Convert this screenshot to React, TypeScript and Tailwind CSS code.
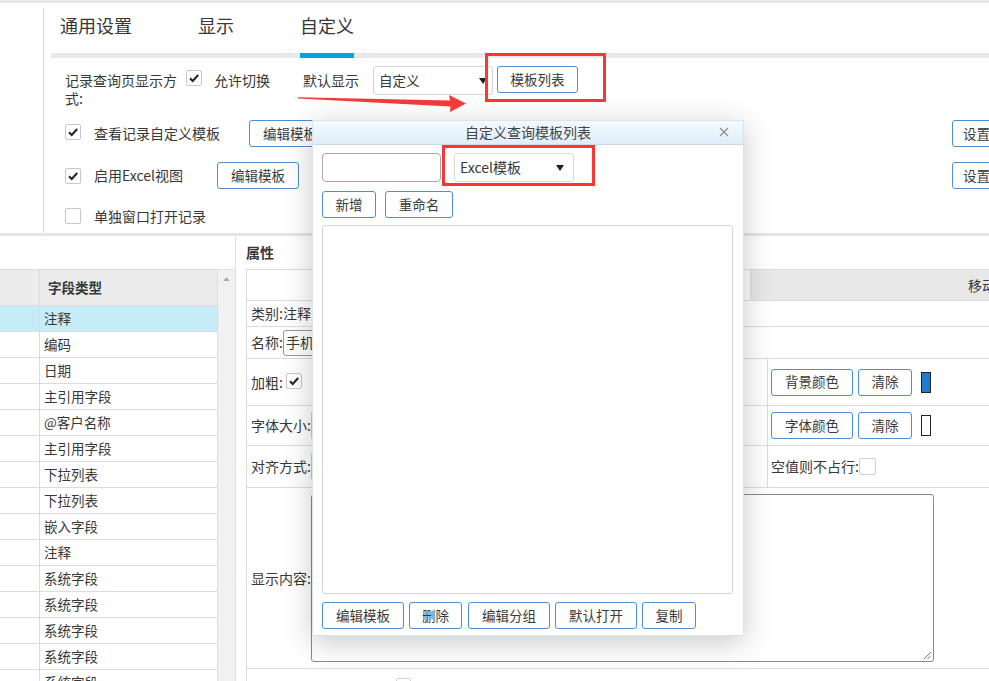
import React from "react";

const fieldTypes = [
  "注释",
  "编码",
  "日期",
  "主引用字段",
  "@客户名称",
  "主引用字段",
  "下拉列表",
  "下拉列表",
  "嵌入字段",
  "注释",
  "系统字段",
  "系统字段",
  "系统字段",
  "系统字段",
  "系统字段",
];

const Check: React.FC<{ checked?: boolean; className?: string }> = ({
  checked,
  className = "",
}) => (
  <span
    className={`inline-flex h-[16px] w-[16px] shrink-0 items-center justify-center rounded-[2px] border border-[#c8c8c8] bg-white ${className}`}
  >
    {checked && (
      <svg viewBox="0 0 12 12" className="h-[12px] w-[12px]">
        <path d="M2 6.3 L4.7 9 L10.2 3" fill="none" stroke="#222" strokeWidth="2" />
      </svg>
    )}
  </span>
);

const Btn: React.FC<{ children: React.ReactNode; className?: string }> = ({
  children,
  className = "",
}) => (
  <button
    className={`flex h-[27px] shrink-0 items-center justify-center rounded-[3px] border border-[#4a8fd8] bg-white text-[13.5px] leading-none text-[#3a3a3a] ${className}`}
  >
    {children}
  </button>
);

const Caret = () => (
  <svg viewBox="0 0 8 6" className="h-[6px] w-[8px]">
    <path d="M0 0 H8 L4 6 Z" fill="#222" />
  </svg>
);

const App: React.FC = () => {
  return (
    <div className="relative h-[681px] w-[989px] overflow-hidden bg-white font-['Noto_Sans_CJK_SC','Microsoft_YaHei',sans-serif] text-[#383838]">
      {/* top settings */}
      <div className="flex h-[236px] border-t-[3px] border-b-[3px] border-[#e6e6e6]">
        <div className="mt-[5px] w-[44px] shrink-0 border-r border-[#d9d9d9]" />
        <div className="flex-1 pl-[7px]">
          <div className="flex gap-[66px] border-b-[5px] border-[#e8e8e8] pl-[9px]">
            <div className="-mb-[5px] border-b-[5px] border-transparent pt-[9px] pb-[14px] text-[18px] leading-[27px]">
              通用设置
            </div>
            <div className="-mb-[5px] border-b-[5px] border-transparent pt-[9px] pb-[14px] text-[18px] leading-[27px]">
              显示
            </div>
            <div className="-mb-[5px] border-b-[5px] border-[#0aa0e6] pt-[9px] pb-[14px] text-[18px] leading-[27px]">
              自定义
            </div>
          </div>

          <div className="pl-[14px] text-[14px]">
            <div className="mt-[8px] flex h-[41px] items-start">
              <div className="mt-[5px] w-[116px] leading-[18px]">记录查询页显示方式:</div>
              <Check checked className="mt-[4px] ml-[5px]" />
              <span className="mt-[5px] ml-[12px] leading-[18px]">允许切换</span>
              <span className="mt-[5px] ml-[33px] leading-[18px]">默认显示</span>
              <div className="ml-[14px] flex h-[29px] w-[120px] items-center justify-between rounded-[3px] border border-[#d4d4d4] pr-[5px] pl-[5px] text-[13.5px]">
                <span>自定义</span>
                <Caret />
              </div>
              <Btn className="ml-[4px] w-[81px]">模板列表</Btn>
            </div>

            <div className="mt-[13px] flex h-[27px] items-center">
              <Check checked className="self-start mt-[4px]" />
              <span className="ml-[13px] w-[155px]">查看记录自定义模板</span>
              <Btn className="w-[82px]">编辑模板</Btn>
              <Btn className="ml-auto -mr-[23px] w-[60px] justify-start pl-[10px]">设置</Btn>
            </div>

            <div className="mt-[15px] flex h-[27px] items-center">
              <Check checked />
              <span className="ml-[13px] w-[123px]">启用Excel视图</span>
              <Btn className="w-[82px]">编辑模板</Btn>
              <Btn className="ml-auto -mr-[23px] w-[60px] justify-start pl-[10px]">设置</Btn>
            </div>

            <div className="mt-[18px] flex h-[18px] items-center">
              <Check />
              <span className="ml-[13px]">单独窗口打开记录</span>
            </div>
          </div>
        </div>
      </div>

      {/* lower area */}
      <div className="flex h-[445px]">
        <div className="flex w-[236px] shrink-0 flex-col border-r border-[#e0e0e0]">
          <div className="h-[33px] shrink-0" />
          <div className="flex flex-1">
            <div className="w-[218px] border-t border-r border-[#dcdcdc] text-[13.5px]">
              <div className="flex h-[36px] border-b border-[#dcdcdc] bg-[#ececec] font-bold">
                <div className="w-[40px] border-r border-[#dcdcdc]" />
                <div className="flex items-center pl-[8px]">字段类型</div>
              </div>
              {fieldTypes.map((t, i) => (
                <div
                  key={i}
                  className={`flex h-[26px] border-b border-[#dcdcdc] ${i === 0 ? "bg-[#c6edf7]" : ""}`}
                >
                  <div className="w-[40px] border-r border-[#dcdcdc]" />
                  <div className="flex items-center pl-[4px]">{t}</div>
                </div>
              ))}
            </div>
            <div className="flex w-[17px] justify-center border-t border-[#e2e2e2] bg-[#f1f1f1] pt-[7px]">
              <svg viewBox="0 0 8 5" className="h-[4px] w-[7px]">
                <path d="M0 5 L4 0 L8 5 Z" fill="#a8a8a8" />
              </svg>
            </div>
          </div>
        </div>

        <div className="ml-[10px] flex flex-1 flex-col">
          <div className="flex h-[33px] shrink-0 items-center text-[14px] font-bold">属性</div>
          <div className="flex-1 border-t border-l border-[#dcdcdc] text-[14px]">
            <div className="flex h-[31px] border-b border-[#dcdcdc]">
              <div className="w-[504px] border-r border-[#dcdcdc]" />
              <div className="flex flex-1 items-center bg-[#e8e8e8] pl-[217px] whitespace-nowrap">移动</div>
            </div>
            <div className="flex h-[26px] items-center border-b border-[#dcdcdc] pl-[4px]">类别:注释</div>
            <div className="flex h-[32px] items-center border-b border-[#dcdcdc] pl-[4px]">
              <span className="w-[32px]">名称:</span>
              <div className="flex h-[26px] w-[200px] items-center rounded-[3px] border border-[#999] pl-[2px]">
                手机号码
              </div>
            </div>
            <div className="flex h-[47px] border-b border-[#dcdcdc]">
              <div className="flex w-[520px] items-center pl-[4px]">
                <span className="w-[35px]">加粗:</span>
                <Check checked className="-mt-[3px]" />
              </div>
              <div className="flex flex-1 items-center border-l border-[#dcdcdc] pl-[3px]">
                <Btn className="w-[82px]">背景颜色</Btn>
                <Btn className="ml-[5px] w-[54px]">清除</Btn>
                <span className="ml-[9px] h-[21px] w-[10px] border border-[#222] bg-[#1f7bd0]" />
              </div>
            </div>
            <div className="flex h-[40px] border-b border-[#dcdcdc]">
              <div className="flex w-[520px] items-center pl-[4px]">
                <span className="w-[60px]">字体大小:</span>
                <div className="h-[29px] w-[120px] rounded-[3px] border border-[#ccc]" />
              </div>
              <div className="flex flex-1 items-center border-l border-[#dcdcdc] pl-[3px]">
                <Btn className="w-[82px]">字体颜色</Btn>
                <Btn className="ml-[5px] w-[54px]">清除</Btn>
                <span className="ml-[9px] h-[21px] w-[10px] border border-[#222] bg-white" />
              </div>
            </div>
            <div className="flex h-[42px] border-b border-[#dcdcdc]">
              <div className="flex w-[520px] items-center pl-[4px]">
                <span className="w-[60px]">对齐方式:</span>
                <div className="h-[29px] w-[120px] rounded-[3px] border border-[#ccc]" />
              </div>
              <div className="flex flex-1 items-center border-l border-[#dcdcdc] pl-[3px]">
                <span>空值则不占行:</span>
                <span className="h-[17px] w-[17px] rounded-[2px] border border-[#d0d0d0] bg-white" />
              </div>
            </div>
            <div className="flex h-[181px] items-center border-b border-[#dcdcdc] pl-[4px]">
              <span className="w-[60px]">显示内容:</span>
              <div className="relative h-[168px] w-[623px] rounded-[3px] border border-[#8a8a8a]">
                <svg viewBox="0 0 8 8" className="absolute right-[2px] bottom-[2px] h-[8px] w-[8px]">
                  <path d="M1 8 L8 1 M4.5 8 L8 4.5" stroke="#777" strokeWidth="1" />
                </svg>
              </div>
            </div>
            <div className="flex h-[20px] items-start pt-[9px] pl-[149px]">
              <span className="h-[15px] w-[15px] rounded-[2px] border border-[#d0d0d0] bg-white" />
            </div>
          </div>
        </div>
      </div>

      {/* dialog */}
      <div className="absolute top-[120px] left-[312px] h-[516px] w-[432px] border border-[#dbe4ec] bg-white text-[14px] shadow-[0_6px_28px_rgba(0,0,0,0.22)]">
        <div className="relative h-[24px] border-b border-[#cbd9e6] bg-gradient-to-b from-[#f4f9fe] to-[#e0edf9] text-center leading-[23px] text-[#444]">
          自定义查询模板列表
          <svg viewBox="0 0 10 10" className="absolute top-[6px] right-[14px] h-[10px] w-[10px]">
            <path d="M1 1 L9 9 M9 1 L1 9" stroke="#8a8a8a" strokeWidth="1.1" />
          </svg>
        </div>
        <div className="px-[9px] pt-[8px]">
          <div className="flex">
            <div className="h-[29px] w-[119px] rounded-[4px] border border-[#a8a8a8]" />
            <div className="ml-[13px] flex h-[29px] w-[120px] items-center justify-between rounded-[3px] border border-[#dadada] pr-[9px] pl-[5px] text-[14px]">
              <span>Excel模板</span>
              <Caret />
            </div>
          </div>
          <div className="mt-[9px] flex">
            <Btn className="w-[54px]">新增</Btn>
            <Btn className="ml-[9px] w-[68px]">重命名</Btn>
          </div>
          <div className="mt-[7px] h-[369px] w-[411px] rounded-[3px] border border-[#d5d5d5]" />
          <div className="mt-[8px] flex">
            <Btn className="w-[82px]">编辑模板</Btn>
            <Btn className="ml-[5px] w-[53px]">删除</Btn>
            <Btn className="ml-[6px] w-[82px]">编辑分组</Btn>
            <Btn className="ml-[5px] w-[82px]">默认打开</Btn>
            <Btn className="ml-[5px] w-[54px]">复制</Btn>
          </div>
        </div>
      </div>

      {/* annotations */}
      <div className="absolute top-[53px] left-[485px] h-[49px] w-[121px] border-[3px] border-[#ff3535]" />
      <div className="absolute top-[145px] left-[442px] h-[41px] w-[153px] border-[3px] border-[#ff3535]" />
      <svg className="absolute top-0 left-0 h-[130px] w-[500px]" viewBox="0 0 500 130">
        <polygon
          points="298,97.2 450,100.6 449,95 466,103.6 450,112 450.5,106.4 298,98.6"
          fill="#f23a3a"
        />
      </svg>
    </div>
  );
};

export default App;
